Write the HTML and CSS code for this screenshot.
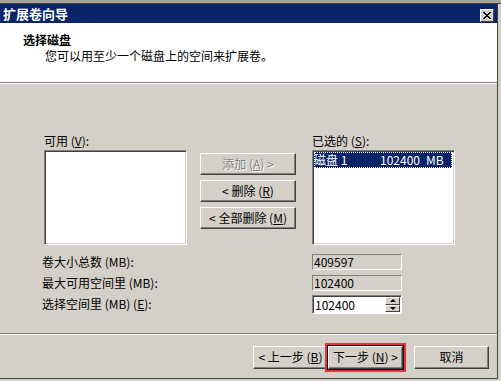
FILE: index.html
```html
<!DOCTYPE html>
<html lang="zh-CN">
<head>
    <meta charset="UTF-8">
    <title>扩展卷向导</title>
    <link rel="stylesheet" href="styles.css">
</head>
<body>

<div class="topstrip"></div>

<div class="window">
    <div class="titlebar">
        <span class="title">扩展卷向导</span>
        <span class="close">
            <svg width="10" height="9" viewBox="0 0 10 9">
                <path d="M1 1 L8 8 M2 1 L9 8 M8 1 L1 8 M9 1 L2 8" stroke="#000" stroke-width="1" fill="none"/>
            </svg>
        </span>
    </div>

    <div class="header">
        <h2>选择磁盘</h2>
        <p>您可以用至少一个磁盘上的空间来扩展卷。</p>
    </div>
    <div class="sep"></div>

    <div class="content">
        <div class="lists">
            <div class="col">
                <div class="label">可用 (<u>V</u>):</div>
                <div class="listbox"></div>
            </div>
            <div class="buttons">
                <div class="btn disabled">添加 (<u>A</u>) &gt;</div>
                <div class="btn">&lt; 删除 (<u>R</u>)</div>
                <div class="btn">&lt; 全部删除 (<u>M</u>)</div>
            </div>
            <div class="col">
                <div class="label">已选的 (<u>S</u>):</div>
                <div class="listbox">
                    <div class="item selected">
                        <span class="c1">磁盘 1</span><span class="c2">102400</span><span>MB</span>
                    </div>
                </div>
            </div>
        </div>

        <div class="fields">
            <div class="row">
                <span class="flabel">卷大小总数 (MB):</span>
                <span class="field readonly">409597</span>
            </div>
            <div class="row">
                <span class="flabel">最大可用空间里 (MB):</span>
                <span class="field readonly">102400</span>
            </div>
            <div class="row">
                <span class="flabel">选择空间里 (MB) (<u>E</u>):</span>
                <span class="field spin">
                    <span class="value">102400</span>
                    <span class="arrows">
                        <span class="arrow"><i class="up"></i></span>
                        <span class="arrow"><i class="down"></i></span>
                    </span>
                </span>
            </div>
        </div>

        <div class="sep bottom"></div>

        <div class="footer">
            <div class="btn wide">&lt; 上一步 (<u>B</u>)</div>
            <div class="mark">
                <div class="btn wide default">下一步 (<u>N</u>) &gt;</div>
            </div>
            <div class="btn wide cancel">取消</div>
        </div>
    </div>
</div>

</body>
</html>
```

FILE: styles.css
```css
body {
    margin: 0;
    background-color: #d4d0c8;
    font-family: "Noto Sans CJK SC", sans-serif;
    font-size: 12px;
    color: #000;
    overflow: hidden;
}
.topstrip {
    height: 3px;
    background-color: #a8a49c;
    border-bottom: 1px solid #404040;
}
.window {
    width: 497px;
    height: 374px;
    background-color: #d4d0c8;
    border-right: 1px solid #404040;
    border-bottom: 1px solid #404040;
}
.titlebar {
    height: 19px;
    background-color: #0a246a;
    display: flex;
    align-items: center;
    justify-content: space-between;
    padding: 0 3px;
}
.title {
    color: white;
    font-weight: bold;
    font-size: 13px;
    line-height: 19px;
}
.close {
    width: 14px;
    height: 13px;
    margin-top: 4px;
    background-color: #d4d0c8;
    border-top: 1px solid #fff;
    border-left: 1px solid #fff;
    border-right: 1px solid #404040;
    border-bottom: 1px solid #404040;
    box-sizing: border-box;
    display: flex;
    align-items: center;
    justify-content: center;
}
.header {
    height: 59px;
    background-color: white;
    box-sizing: border-box;
    padding: 9px 0 0 23px;
}
.header h2 {
    margin: 0;
    font-size: 12px;
    font-weight: bold;
    line-height: 15px;
}
.header p {
    margin: 1px 0 0 22px;
    line-height: 15px;
}
.sep {
    border-top: 1px solid #808080;
    border-bottom: 1px solid #fff;
}
.content {
    padding-top: 50px;
}
.lists {
    display: flex;
    padding-left: 44px;
}
.label {
    line-height: 14px;
    margin-bottom: 2px;
}
.listbox {
    width: 143px;
    height: 95px;
    background-color: white;
    box-sizing: border-box;
    border-top: 1px solid #808080;
    border-left: 1px solid #808080;
    border-right: 1px solid #fff;
    border-bottom: 1px solid #fff;
    box-shadow: inset 1px 1px #404040, inset -1px -1px #d4d0c8;
    padding: 1px 2px 0 1px;
}
.item {
    height: 16px;
    line-height: 16px;
    display: flex;
    white-space: pre;
}
.item.selected {
    background-color: #0a246a;
    color: white;
    outline: 1px dotted #fff;
    outline-offset: -1px;
}
.item .c1 {
    width: 66px;
}
.item .c2 {
    margin-right: 6px;
}
.buttons {
    display: flex;
    flex-direction: column;
    gap: 5px;
    margin: 19px 16px 0 13px;
}
.btn {
    width: 96px;
    height: 22px;
    box-sizing: border-box;
    line-height: 19px;
    text-align: center;
    white-space: nowrap;
    background-color: #d4d0c8;
    border-top: 1px solid #fff;
    border-left: 1px solid #fff;
    border-right: 1px solid #404040;
    border-bottom: 1px solid #404040;
    box-shadow: inset -1px -1px #808080;
}
.btn.disabled {
    color: #808080;
    text-shadow: 1px 1px #fff;
}
.fields {
    margin-top: 9px;
    padding-left: 42px;
}
.row {
    height: 21px;
    display: flex;
    align-items: flex-start;
}
.flabel {
    width: 270px;
    line-height: 15px;
}
.field {
    width: 90px;
    box-sizing: border-box;
    padding-left: 1px;
}
.field.readonly {
    height: 16px;
    line-height: 14px;
    border-top: 1px solid #808080;
    border-left: 1px solid #808080;
    border-right: 1px solid #fff;
    border-bottom: 1px solid #fff;
}
.field.spin {
    height: 19px;
    margin-top: -1px;
    display: flex;
    justify-content: space-between;
    background-color: white;
    border-top: 1px solid #808080;
    border-left: 1px solid #808080;
    border-right: 1px solid #fff;
    border-bottom: 1px solid #fff;
    box-shadow: inset 1px 1px #404040;
    padding: 1px 1px 1px 2px;
}
.value {
    line-height: 16px;
}
.arrows {
    display: flex;
    flex-direction: column;
    width: 15px;
}
.arrow {
    height: 8px;
    display: flex;
    align-items: center;
    justify-content: center;
    background-color: #d4d0c8;
    box-sizing: border-box;
    border-top: 1px solid #fff;
    border-left: 1px solid #fff;
    border-right: 1px solid #404040;
    border-bottom: 1px solid #404040;
}
.arrow i {
    width: 0;
    height: 0;
    border-left: 3px solid transparent;
    border-right: 3px solid transparent;
}
.arrow .up {
    border-bottom: 3px solid #000;
}
.arrow .down {
    border-top: 3px solid #000;
}
.sep.bottom {
    margin-top: 16px;
}
.footer {
    display: flex;
    align-items: center;
    margin-top: 8px;
    padding-left: 253px;
}
.btn.wide {
    width: 75px;
    height: 23px;
    line-height: 20px;
}
.mark {
    border: 2px solid #e8303c;
    margin-left: -3px;
    padding: 1px;
}
.btn.default {
    outline: 1px solid #000;
    outline-offset: 0;
}
.btn.cancel {
    margin-left: 8px;
}
```
